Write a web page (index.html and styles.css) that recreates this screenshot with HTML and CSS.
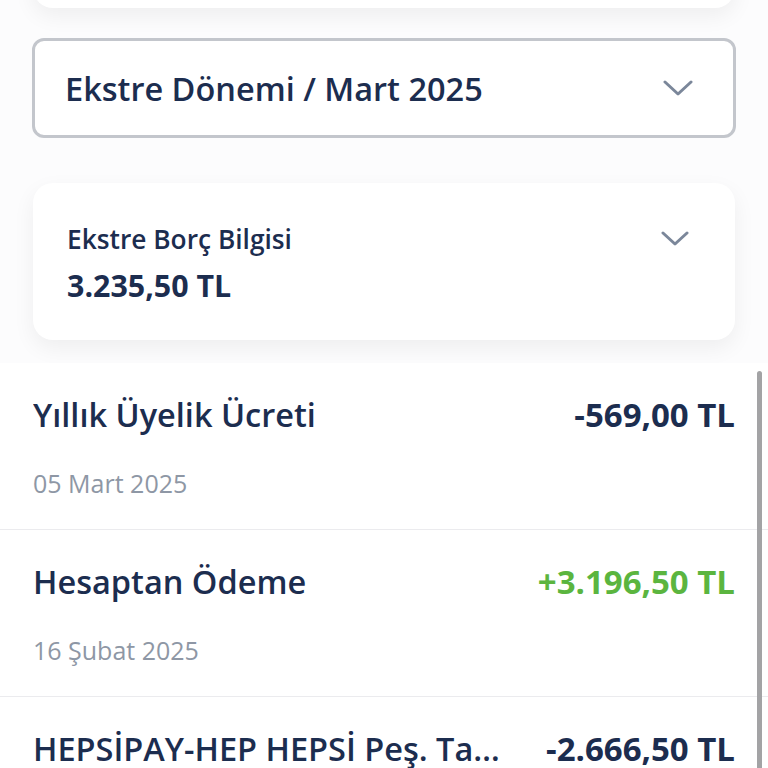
FILE: index.html
```html
<!DOCTYPE html>
<html lang="tr">
<head>
    <meta charset="UTF-8">
    <meta name="viewport" content="width=device-width, initial-scale=1.0">
    <title>Ekstre</title>
    <link rel="stylesheet" href="styles.css">
</head>
<body>
    <div class="card top-card"></div>

    <div class="period-select">
        <span>Ekstre Dönemi / Mart 2025</span>
        <svg class="chevron" width="30" height="16" viewBox="0 0 30 16">
            <polyline points="2,2 15,14 28,2" fill="none" stroke="#7b879a" stroke-width="3" stroke-linecap="round" stroke-linejoin="round"/>
        </svg>
    </div>

    <div class="card debt-card">
        <div class="debt-info">
            <div class="debt-label">Ekstre Borç Bilgisi</div>
            <div class="debt-amount">3.235,50 TL</div>
        </div>
        <svg class="chevron small" width="28" height="15" viewBox="0 0 28 15">
            <polyline points="2,2 14,13 26,2" fill="none" stroke="#7b879a" stroke-width="3" stroke-linecap="round" stroke-linejoin="round"/>
        </svg>
    </div>

    <div class="transactions">
        <div class="scrollbar"></div>

        <div class="tx">
            <div class="tx-line">
                <span class="tx-title">Yıllık Üyelik Ücreti</span>
                <span class="tx-amount">-569,00 TL</span>
            </div>
            <div class="tx-date">05 Mart 2025</div>
        </div>

        <div class="tx">
            <div class="tx-line">
                <span class="tx-title">Hesaptan Ödeme</span>
                <span class="tx-amount plus">+3.196,50 TL</span>
            </div>
            <div class="tx-date">16 Şubat 2025</div>
        </div>

        <div class="tx">
            <div class="tx-line">
                <span class="tx-title">HEPSİPAY-HEP HEPSİ Peş. Taksit İşlemi</span>
                <span class="tx-amount">-2.666,50 TL</span>
            </div>
        </div>
    </div>
</body>
</html>
```

FILE: styles.css
```css
body {
    margin: 0;
    font-family: "Open Sans", "Noto Sans", sans-serif;
    background-color: #fcfcfd;
    color: #1c2d4f;
    height: 768px;
    overflow: hidden;
}

.card {
    background: #fff;
    border-radius: 20px;
    box-shadow: 0 8px 22px rgba(0, 0, 0, 0.06);
    margin: 0 33px;
}

.top-card {
    height: 60px;
    margin-top: -52px;
}

.period-select {
    margin: 30px 32px 0;
    height: 94px;
    border: 3px solid #c3c6cc;
    border-radius: 12px;
    background: #fff;
    display: flex;
    align-items: center;
    justify-content: space-between;
    padding: 0 40px 0 30px;
    font-size: 32.5px;
    font-weight: 600;
}

.debt-card {
    margin-top: 45px;
    height: 157px;
    display: flex;
    justify-content: space-between;
    align-items: flex-start;
    padding: 0 46px 0 34px;
}

.debt-info {
    padding-top: 39px;
}

.debt-label {
    font-size: 26.3px;
    font-weight: 600;
    line-height: 34px;
}

.debt-amount {
    font-size: 30.4px;
    font-weight: 700;
    line-height: 40px;
    margin-top: 10px;
}

.chevron.small {
    margin-top: 48px;
}

.transactions {
    position: relative;
    margin-top: 23px;
    background: #fff;
    height: 420px;
}

.scrollbar {
    position: absolute;
    right: 6px;
    top: 8px;
    bottom: 0;
    width: 5px;
    border-radius: 3px;
    background: #a3a3a5;
}

.tx {
    height: 106px;
    padding: 29px 33px 31px;
    border-bottom: 1px solid #ebebee;
    display: flex;
    flex-direction: column;
    justify-content: space-between;
}

.tx-line {
    display: flex;
    justify-content: space-between;
    align-items: center;
    line-height: 46px;
    gap: 40px;
}

.tx-title {
    font-size: 32.5px;
    font-weight: 600;
    white-space: nowrap;
    overflow: hidden;
    text-overflow: ellipsis;
}

.tx-amount {
    font-size: 33px;
    font-weight: 700;
    white-space: nowrap;
}

.tx-amount.plus {
    color: #5bb53f;
}

.tx-date {
    font-size: 25px;
    line-height: 30px;
    color: #8e97a5;
}
```
